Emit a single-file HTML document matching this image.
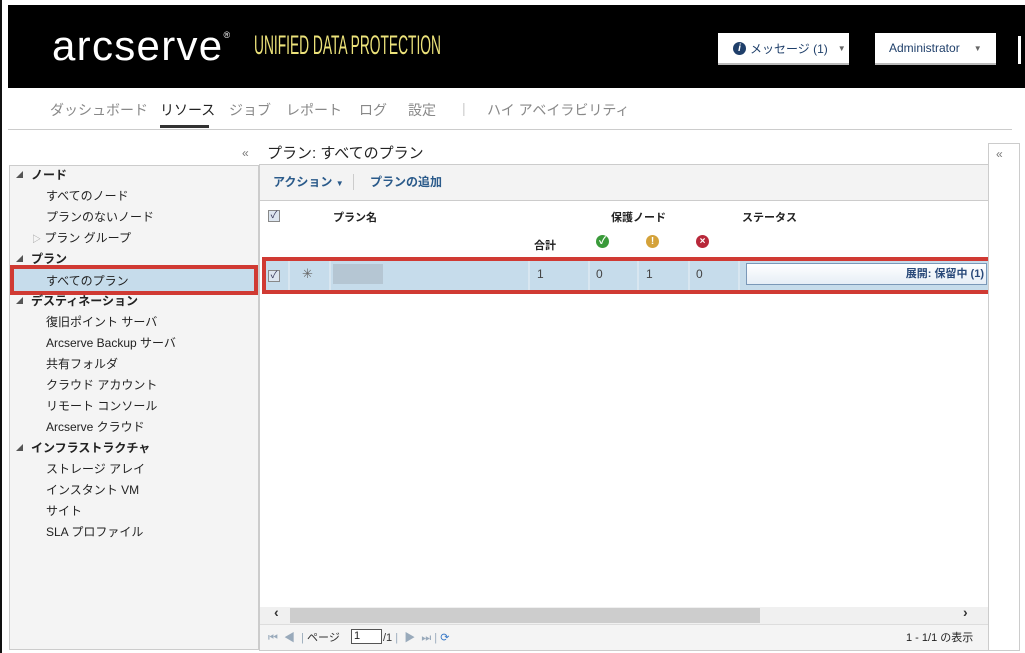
<!DOCTYPE html>
<html><head><meta charset="utf-8"><style>
*{margin:0;padding:0;box-sizing:border-box}
body{width:1025px;height:653px;background:#fff;position:relative;overflow:hidden;font-family:"Liberation Sans","Noto Sans CJK JP",sans-serif;font-size:12px;color:#222}
.a{position:absolute;white-space:nowrap}
.hdr{left:8px;top:5px;width:1017px;height:83px;background:#000}
.logo{left:52px;top:22px;color:#fff;font-size:42px;letter-spacing:1.3px;font-weight:400}
.udp{left:254px;top:30px;color:#ece27a;font-size:27px;transform:scaleX(.51);transform-origin:left}
.btn{background:#fff;height:32px;top:33px;font-size:12px;color:#1f3f6a;display:flex;align-items:center;border-bottom:2px solid #bbb}
.nav{top:100px;font-size:14px;color:#888}
.side{left:9px;top:165px;width:250px;height:485px;background:#f4f4f4;border:1px solid #ccc}
.it{left:46px;font-size:12px;color:#222}
.hd{left:16px;font-weight:bold;font-size:12px}
.hd:before{content:"◢";font-size:7px;color:#555;vertical-align:2px;margin-right:8px}
.main{left:259px;top:164px;width:731px;height:487px;border:1px solid #ccc;background:#fff}
.bold{font-weight:bold;font-size:11px}
.cb{width:12px;height:12px;border:1px solid #888;background:#dde6f0;font-size:10px;line-height:10px;text-align:center;color:#335}
.dot{width:13px;height:13px;border-radius:50%;color:#fff;font-size:10px;font-weight:bold;text-align:center;line-height:13px}
</style></head><body>
<div class="a" style="left:0;top:0;width:2px;height:653px;background:#111"></div>
<div class="a hdr"></div>
<div class="a logo">arcserve<sup style="font-size:9px;vertical-align:22px">®</sup></div>
<div class="a udp">UNIFIED DATA PROTECTION</div>
<div class="a btn" style="left:718px;width:131px;padding-left:15px;white-space:nowrap"><span style="display:inline-block;width:13px;height:13px;border-radius:50%;background:#1f3f6a;color:#fff;font-size:10px;text-align:center;line-height:13px;font-style:italic;font-weight:bold;margin-right:4px">i</span>メッセージ (1)<span style="margin-left:10px;font-size:8px;color:#666">▼</span></div>
<div class="a btn" style="left:875px;width:121px;padding-left:14px">Administrator<span style="margin-left:14px;font-size:8px;color:#666">▼</span></div>
<div class="a" style="left:1018px;top:36px;width:3px;height:28px;background:#fff"></div>
<div class="a nav" style="left:50px">ダッシュボード</div>
<div class="a nav" style="left:160px;color:#222">リソース</div>
<div class="a" style="left:160px;top:125px;width:49px;height:3px;background:#333"></div>
<div class="a nav" style="left:229px">ジョブ</div>
<div class="a nav" style="left:286px">レポート</div>
<div class="a nav" style="left:359px">ログ</div>
<div class="a nav" style="left:408px">設定</div>
<div class="a nav" style="left:462px;color:#ccc">|</div>
<div class="a nav" style="left:487px">ハイ アベイラビリティ</div>
<div class="a" style="left:8px;top:129px;width:1004px;height:1px;background:#ccc"></div>
<div class="a" style="left:242px;top:146px;color:#777;font-size:12px">«</div>
<div class="a" style="left:267px;top:142px;font-size:15px;color:#222">プラン: すべてのプラン</div>
<div class="a side"></div>
<div class="a hd" style="top:166px">ノード</div>
<div class="a it" style="top:187px">すべてのノード</div>
<div class="a it" style="top:208px">プランのないノード</div>
<div class="a it" style="left:32px;top:229px"><span style="color:#999;font-size:9px">▷</span> プラン グループ</div>
<div class="a hd" style="top:250px">プラン</div>
<div class="a" style="left:10px;top:265px;width:248px;height:30px;border:4px solid #d03a33;background:#c6dceb"></div>
<div class="a it" style="top:272px">すべてのプラン</div>
<div class="a hd" style="top:292px">デスティネーション</div>
<div class="a it" style="top:313px">復旧ポイント サーバ</div>
<div class="a it" style="top:334px">Arcserve Backup サーバ</div>
<div class="a it" style="top:355px">共有フォルダ</div>
<div class="a it" style="top:376px">クラウド アカウント</div>
<div class="a it" style="top:397px">リモート コンソール</div>
<div class="a it" style="top:418px">Arcserve クラウド</div>
<div class="a hd" style="top:439px">インフラストラクチャ</div>
<div class="a it" style="top:460px">ストレージ アレイ</div>
<div class="a it" style="top:481px">インスタント VM</div>
<div class="a it" style="top:502px">サイト</div>
<div class="a it" style="top:523px">SLA プロファイル</div>
<div class="a main"></div>
<div class="a" style="left:260px;top:165px;width:729px;height:36px;background:#f3f3f3;border-bottom:1px solid #ccc"></div>
<div class="a" style="left:273px;top:173px;color:#2a5a8a;font-weight:bold;font-size:12px">アクション <span style="font-size:8px">▼</span></div>
<div class="a" style="left:353px;top:174px;width:1px;height:16px;background:#ccc"></div>
<div class="a" style="left:370px;top:173px;color:#2a5a8a;font-weight:bold;font-size:12px">プランの追加</div>
<div class="a cb" style="left:268px;top:210px">✓</div>
<div class="a bold" style="left:333px;top:209px">プラン名</div>
<div class="a bold" style="left:611px;top:209px">保護ノード</div>
<div class="a bold" style="left:742px;top:209px">ステータス</div>
<div class="a bold" style="left:534px;top:237px">合計</div>
<div class="a dot" style="left:596px;top:235px;background:#3a9a3a">✓</div>
<div class="a dot" style="left:646px;top:235px;background:#d4a23a">!</div>
<div class="a dot" style="left:696px;top:235px;background:#b8283a">×</div>
<div class="a" style="left:262px;top:257px;width:730px;height:37px;border:4px solid #d03a33;background:#c6dceb"></div>
<div class="a" style="left:288px;top:261px;width:2px;height:29px;background:#d8e6f0"></div>
<div class="a" style="left:329px;top:261px;width:2px;height:29px;background:#d8e6f0"></div>
<div class="a" style="left:528px;top:261px;width:2px;height:29px;background:#d8e6f0"></div>
<div class="a" style="left:588px;top:261px;width:2px;height:29px;background:#d8e6f0"></div>
<div class="a" style="left:637px;top:261px;width:2px;height:29px;background:#d8e6f0"></div>
<div class="a" style="left:688px;top:261px;width:2px;height:29px;background:#d8e6f0"></div>
<div class="a" style="left:738px;top:261px;width:2px;height:29px;background:#d8e6f0"></div>
<div class="a cb" style="left:268px;top:270px">✓</div>
<div class="a" style="left:302px;top:266px;color:#666;font-size:13px">✳</div>
<div class="a" style="left:333px;top:264px;width:50px;height:20px;background:#b5c6d3"></div>
<div class="a" style="left:537px;top:267px;color:#444">1</div>
<div class="a" style="left:596px;top:267px;color:#444">0</div>
<div class="a" style="left:646px;top:267px;color:#444">1</div>
<div class="a" style="left:696px;top:267px;color:#444">0</div>
<div class="a" style="left:746px;top:263px;width:241px;height:22px;border:1px solid #7a98b8;background:linear-gradient(#fff,#e6eef6);text-align:right;padding-right:2px;line-height:20px;color:#2a4a7a;font-weight:bold;font-size:11px;overflow:hidden">展開: 保留中 (1)</div>
<div class="a" style="left:260px;top:607px;width:729px;height:17px;background:#f0f0f0"></div>
<div class="a" style="left:290px;top:608px;width:470px;height:15px;background:#cdcdcd"></div>
<div class="a" style="left:274px;top:604px;font-size:14px;color:#333;font-weight:bold">‹</div>
<div class="a" style="left:963px;top:604px;font-size:14px;color:#333;font-weight:bold">›</div>
<div class="a" style="left:260px;top:624px;width:729px;height:26px;background:#f4f4f4;border-top:1px solid #ddd"></div>
<div class="a" style="left:268px;top:629px;color:#9ab;font-size:11px">⏮ &nbsp;◀ &nbsp;| <span style="color:#333">ページ</span></div>
<div class="a" style="left:351px;top:629px;width:31px;height:15px;border:1px solid #555;background:#fff;font-size:11px;padding-left:2px">1</div>
<div class="a" style="left:383px;top:629px;font-size:11px;color:#333">/1 <span style="color:#9ab">| &nbsp;▶ &nbsp;⏭ |</span> <span style="color:#3a7ac8">⟳</span></div>
<div class="a" style="left:906px;top:629px;font-size:11px;color:#222">1 - 1/1 の表示</div>
<div class="a" style="left:988px;top:143px;width:32px;height:508px;border:1px solid #ccc;background:#fff"></div>
<div class="a" style="left:996px;top:147px;color:#777;font-size:12px">«</div>
</body></html>
